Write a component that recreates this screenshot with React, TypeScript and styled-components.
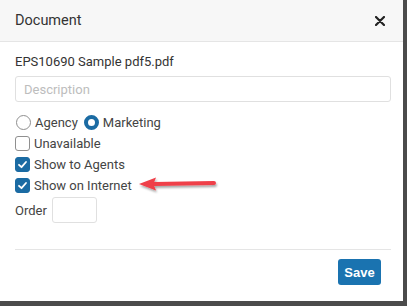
import React from "react";
import styled, { createGlobalStyle } from "styled-components";

const GlobalStyle = createGlobalStyle`
	html, body {
		margin: 0;
		padding: 0;
		background: #4b4b4b;
		font-family: Roboto, "Liberation Sans", Arial, sans-serif;
	}
`;

const Dialog = styled.div`
	position: relative;
	width: 403px;
	height: 301px;
	background: #fff;
	display: flex;
	flex-direction: column;
	color: #333;
`;

const Header = styled.div`
	height: 41px;
	display: flex;
	align-items: center;
	justify-content: space-between;
	padding: 0 18px 0 15px;
	background: #f7f7f7;
	border-bottom: 1px solid #e5e5e5;
`;

const Title = styled.div`
	font-size: 14.5px;
	color: #333;
`;

const Close = styled.button`
	border: 0;
	background: none;
	padding: 0;
	display: flex;
	color: #222;
`;

const Body = styled.div`
	padding: 10px 12px 0 15px;
	display: flex;
	flex-direction: column;
	font-size: 13px;
`;

const FileName = styled.div`
	line-height: 20px;
	margin-bottom: 4px;
`;

const TextInput = styled.input<{ $width?: number }>`
	box-sizing: border-box;
	height: 26px;
	width: ${(p) => (p.$width ? `${p.$width}px` : "100%")};
	border: 1px solid #e0e0e0;
	border-radius: 3px;
	padding: 0 8px;
	font-family: inherit;
	font-size: 13px;
	color: #333;
	outline: none;
	&::placeholder {
		color: #bdbdbd;
	}
`;

const Options = styled.div`
	margin-top: 10px;
	display: flex;
	flex-direction: column;
`;

const Row = styled.div`
	height: 21px;
	display: flex;
	align-items: center;
	gap: 4px;
`;

const Label = styled.span`
	color: #444;
	margin-right: 1px;
`;

const Box = styled.span<{ $checked?: boolean }>`
	box-sizing: border-box;
	width: 15px;
	height: 15px;
	border-radius: 3px;
	border: 1px solid ${(p) => (p.$checked ? "#1b6ba3" : "#8f8f8f")};
	background: ${(p) => (p.$checked ? "#1b6ba3" : "#fff")};
	display: flex;
	align-items: center;
	justify-content: center;
`;

const Radio = styled.span<{ $checked?: boolean }>`
	box-sizing: border-box;
	width: 15px;
	height: 15px;
	border-radius: 50%;
	border: ${(p) => (p.$checked ? "4px solid #1b6ba3" : "1px solid #8f8f8f")};
	background: #fff;
	margin-left: 1px;
`;

const OrderRow = styled.div`
	margin-top: 1px;
	display: flex;
	align-items: center;
	gap: 4px;
`;

const Divider = styled.div`
	margin: 26px 0 0;
	height: 1px;
	background: #e5e5e5;
`;

const Footer = styled.div`
	display: flex;
	justify-content: flex-end;
	padding: 9px 22px 0 0;
`;

const SaveButton = styled.button`
	height: 26px;
	width: 43px;
	border: 0;
	border-radius: 3px;
	background: #1a73b0;
	color: #fff;
	font-family: "Liberation Sans", Arial, sans-serif;
	font-weight: bold;
	font-size: 13px;
	padding: 0;
`;

const Arrow = styled.svg`
	position: absolute;
	left: 136px;
	top: 175px;
	overflow: visible;
`;

function Check() {
	return (
		<svg width="11" height="11" viewBox="0 0 11 11">
			<path d="M2 5.8 L4.5 8.2 L9 3" fill="none" stroke="#fff" strokeWidth="1.8" strokeLinecap="round" strokeLinejoin="round" />
		</svg>
	);
}

function CheckItem({ label, checked }: { label: string; checked?: boolean }) {
	return (
		<Row>
			<Box $checked={checked}>{checked && <Check />}</Box>
			<Label>{label}</Label>
		</Row>
	);
}

export default function App() {
	return (
		<>
			<GlobalStyle />
			<Dialog>
				<Header>
					<Title>Document</Title>
					<Close>
						<svg width="10" height="10" viewBox="0 0 10 10">
							<path d="M1 1 L9 9 M9 1 L1 9" stroke="#222" strokeWidth="2.2" strokeLinecap="round" />
						</svg>
					</Close>
				</Header>
				<Body>
					<FileName>EPS10690 Sample pdf5.pdf</FileName>
					<TextInput placeholder="Description" />
					<Options>
						<Row>
							<Radio />
							<Label>Agency</Label>
							<Radio $checked />
							<Label>Marketing</Label>
						</Row>
						<CheckItem label="Unavailable" />
						<CheckItem label="Show to Agents" checked />
						<CheckItem label="Show on Internet" checked />
					</Options>
					<OrderRow>
						<Label>Order</Label>
						<TextInput $width={45} />
					</OrderRow>
					<Divider />
				</Body>
				<Footer>
					<SaveButton>Save</SaveButton>
				</Footer>
				<Arrow width="84" height="20" viewBox="0 0 84 20">
					<defs>
						<filter id="sh" x="-20%" y="-50%" width="140%" height="200%">
							<feDropShadow dx="1" dy="2" stdDeviation="1.2" floodColor="#000" floodOpacity="0.35" />
						</filter>
					</defs>
					<g filter="url(#sh)">
						<path d="M18 9 L78 8" stroke="#ef3f49" strokeWidth="4" strokeLinecap="round" />
						<path d="M3 9 L20 2.5 L17.5 9 L20 15.5 Z" fill="#ef3f49" />
					</g>
				</Arrow>
			</Dialog>
		</>
	);
}
